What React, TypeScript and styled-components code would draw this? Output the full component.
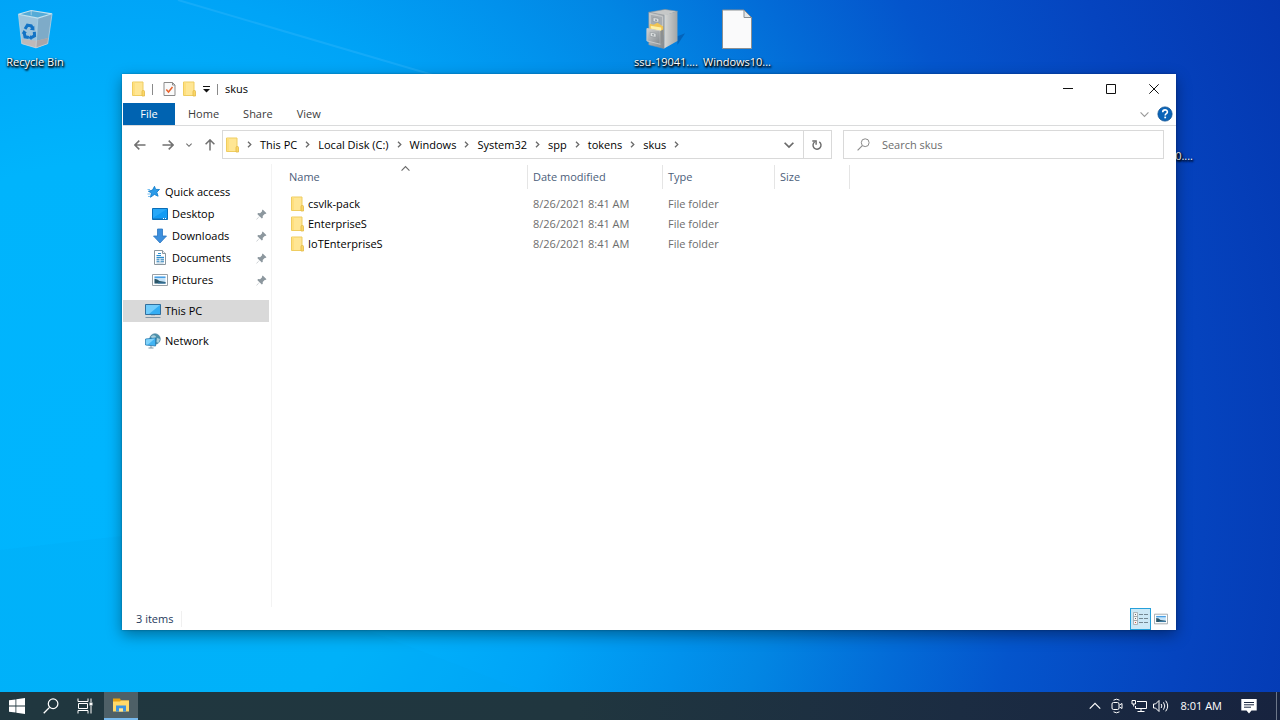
import React from "react";
import styled, { createGlobalStyle } from "styled-components";

const FONT = '"Open Sans", "Noto Sans", "Liberation Sans", sans-serif';

const GlobalStyle = createGlobalStyle`
  *, *::before, *::after { box-sizing: border-box; }
  body { margin: 0; font: 11px/16px ${FONT}; color: #000; }
  button, input { font: inherit; color: inherit; margin: 0; padding: 0; border: 0; background: none; }
  a { color: inherit; text-decoration: none; }
  ul, ol { margin: 0; padding: 0; list-style: none; }
  svg { display: block; flex: none; }
`;

/* ---------- desktop ---------- */

const Desktop = styled.div`
  position: relative;
  display: flex;
  flex-direction: column;
  min-height: 100vh;
  overflow: hidden;
  background: radial-gradient(circle farthest-corner at 8% 65%, #00b5fe 0%, #00b4fc 24%, #00a4f7 38%, #0191ec 48%, #0286e3 54%, #036bd7 64%, #0455cc 73%, #0544bf 86%, #0437b0 100%);
`;

const LightBeams = styled.svg`
  position: absolute;
  inset: 0;
  width: 100%;
  height: 100%;
`;

const Workspace = styled.main`
  position: relative;
  flex: 1;
  display: flex;
  padding: 74px 104px 62px 122px;
`;

const Shortcut = styled.a<{ $x: number; $y: number }>`
  position: absolute;
  left: ${(p) => p.$x}px;
  top: ${(p) => p.$y}px;
  width: 70px;
  display: flex;
  flex-direction: column;
  align-items: center;
  gap: 3px;
  color: #fff;
  white-space: nowrap;
  text-shadow: 0 1px 2px #000, 1px 1px 2px #000, 1px 2px 2px rgba(0, 0, 0, 0.7);
`;

const ClippedLabel = styled.span`
  position: absolute;
  right: 87px;
  top: 148px;
  color: #fff;
  text-shadow: 0 1px 2px #000, 1px 1px 2px #000, 1px 2px 2px rgba(0, 0, 0, 0.7);
`;

/* ---------- window ---------- */

const Window = styled.section`
  position: relative;
  flex: 1;
  min-width: 0;
  display: flex;
  flex-direction: column;
  padding: 1px 0 0 1px;
  background: #fff;
  box-shadow: 0 5px 14px rgba(0, 0, 0, 0.38), 0 0 2px rgba(0, 0, 0, 0.3);
`;

const TitleBar = styled.header`
  display: flex;
  align-items: center;
  height: 28px;
  padding: 0 1px 0 9px;
`;

const QuickTools = styled.div`
  display: flex;
  align-items: center;
  flex: 1;
  gap: 7px;
`;

const Separator = styled.span<{ $wide?: boolean }>`
  width: 1px;
  height: 11px;
  margin-right: ${(p) => (p.$wide ? "3px" : "0")};
  background: #8a8a8a;
`;

const ToolButton = styled.button`
  display: grid;
  place-items: center;
`;

const Title = styled.h1`
  margin: 0;
  font-size: 11px;
  font-weight: 400;
`;

const CaptionButton = styled.button`
  width: 43px;
  height: 28px;
  display: grid;
  place-items: center;
`;

const Ribbon = styled.nav`
  display: flex;
  align-items: stretch;
  height: 23px;
  border-bottom: 1px solid #dadbdc;
`;

const Tab = styled.button<{ $primary?: boolean }>`
  width: ${(p) => (p.$primary ? "52px" : "auto")};
  margin-right: ${(p) => (p.$primary ? "1px" : "0")};
  padding: 0 ${(p) => (p.$primary ? "0" : "12px")};
  line-height: 22px;
  color: ${(p) => (p.$primary ? "#fff" : "#3b3b3b")};
  background: ${(p) => (p.$primary ? "#0063b1" : "transparent")};
`;

const RibbonEnd = styled.div`
  display: flex;
  align-items: center;
  gap: 8px;
  margin-left: auto;
  padding-right: 3px;
`;

const NavBar = styled.div`
  display: grid;
  grid-template-columns: auto minmax(0, 29fr) minmax(0, 15fr);
  align-items: center;
  height: 37px;
  padding: 0 12px 0 11px;
`;

const NavButtons = styled.div`
  display: flex;
  align-items: center;
  gap: 12px;
  padding: 1px 6px 0 0;
`;

const NavButton = styled(ToolButton)<{ $spaced?: boolean }>`
  margin-right: ${(p) => (p.$spaced ? "4px" : "0")};
`;

const AddressBox = styled.div`
  min-width: 0;
  display: flex;
  align-items: stretch;
  height: 29px;
  margin-right: 11px;
  border: 1px solid #d9d9d9;
`;

const Crumbs = styled.ol`
  flex: 1;
  min-width: 0;
  display: flex;
  align-items: center;
  padding-left: 3px;
  white-space: nowrap;
  overflow: hidden;
`;

const Crumb = styled.li`
  display: flex;
  align-items: center;
`;

const CrumbArrow = styled.span`
  width: 21px;
  display: grid;
  place-items: center;
`;

const AddressButton = styled.button<{ $divided?: boolean }>`
  width: 28px;
  display: grid;
  place-items: center;
  border-left: ${(p) => (p.$divided ? "1px solid #d9d9d9" : "0")};
`;

const SearchBox = styled.label`
  min-width: 0;
  display: flex;
  align-items: center;
  gap: 12px;
  height: 29px;
  padding-left: 13px;
  border: 1px solid #d9d9d9;
`;

const SearchInput = styled.input`
  flex: 1;
  min-width: 0;
  outline: 0;
  &::placeholder { color: #6d6d6d; opacity: 1; }
`;

const Body = styled.div`
  flex: 1;
  display: flex;
  min-height: 0;
  padding-top: 1px;
`;

const Sidebar = styled.aside`
  flex: none;
  width: 149px;
  padding: 17px 2px 0 0;
  border-right: 1px solid #f3f3f3;
`;

const Group = styled.ul<{ $main?: boolean }>`
  margin-bottom: ${(p) => (p.$main ? "9px" : "8px")};
`;

const Place = styled.a<{ $nested?: boolean; $selected?: boolean }>`
  display: flex;
  align-items: center;
  gap: 4px;
  height: 22px;
  padding-left: ${(p) => (p.$nested ? "29px" : "22px")};
  padding-right: 2px;
  background: ${(p) => (p.$selected ? "#d9d9d9" : "transparent")};
`;

const PlaceName = styled.span`
  flex: 1;
`;

const Listing = styled.div`
  position: relative;
  flex: 1;
  min-width: 0;
  overflow: hidden;
`;

const SortMark = styled.span`
  position: absolute;
  left: 129px;
  top: 0;
`;

const FileTable = styled.table`
  width: 100%;
  table-layout: fixed;
  border-collapse: collapse;
  text-align: left;
`;

const Column = styled.col<{ $width?: number }>`
  width: ${(p) => (p.$width ? `${p.$width}px` : "auto")};
`;

const HeadCell = styled.th`
  padding: 1px 0 5px;
  font-weight: 400;
  color: #4c607a;
`;

const HeadLabel = styled.div<{ $first?: boolean }>`
  height: 24px;
  line-height: 24px;
  padding-left: ${(p) => (p.$first ? "17px" : "5px")};
  border-right: 1px solid #e5e5e5;
`;

const Cell = styled.td`
  height: 20px;
  padding: 0 0 0 5px;
  color: #6d6d6d;
  white-space: nowrap;
`;

const FileName = styled.a`
  display: flex;
  align-items: center;
  gap: 4px;
  padding-left: 14px;
  color: #000;
`;

const StatusBar = styled.footer`
  display: flex;
  align-items: center;
  justify-content: space-between;
  height: 23px;
  padding: 0 5px 0 13px;
  color: #1e395b;
`;

const ItemCount = styled.span`
  padding-right: 8px;
  border-right: 1px solid #f0f0f0;
`;

const Views = styled.div`
  display: flex;
`;

const ViewButton = styled.button<{ $on?: boolean }>`
  width: ${(p) => (p.$on ? "21px" : "20px")};
  height: 22px;
  display: grid;
  place-items: center;
  background: ${(p) => (p.$on ? "#cce8f6" : "transparent")};
  border: ${(p) => (p.$on ? "1px solid #26a0da" : "0")};
`;

/* ---------- taskbar ---------- */

const Taskbar = styled.footer`
  position: relative;
  display: flex;
  align-items: stretch;
  height: 28px;
  color: #fff;
  background: linear-gradient(90deg, #20373f 0%, #20363f 45%, #1b2c42 75%, #17233f 100%);
`;

const TaskButton = styled.button<{ $active?: boolean }>`
  width: 34px;
  margin-left: ${(p) => (p.$active ? "2px" : "0")};
  display: grid;
  place-items: center;
  background: ${(p) => (p.$active ? "#4e6067" : "transparent")};
  border-bottom: ${(p) => (p.$active ? "2px solid #76b9ed" : "0")};
`;

const Tray = styled.div`
  margin-left: auto;
  display: flex;
  align-items: center;
`;

const TrayButton = styled.button`
  width: 22px;
  height: 28px;
  display: grid;
  place-items: center;
`;

const Clock = styled.time`
  padding: 0 16px 0 9px;
`;

const ShowDesktop = styled.button`
  width: 4px;
  height: 28px;
  margin-left: 16px;
  border-left: 1px solid #6c7789;
`;

/* ---------- icons ---------- */

const FolderIcon = () => (
  <svg width="13" height="16" viewBox="0 0 13 16" aria-hidden="true">
    <path d="M.5 1h10.500v13.500H.5z" fill="#ffe694" stroke="#efcd60" />
    <path d="M1 1.500h2v12.500H1z" fill="#ffdf7d" />
    <path d="M10 10.500q0-1 1-1h.5q1 0 1 1v4.500h-2.500z" fill="#fbd766" stroke="#e3b946" strokeWidth=".8" />
  </svg>
);

const PropertiesIcon = () => (
  <svg width="13" height="16" viewBox="0 0 13 16" aria-hidden="true">
    <path d="M1 1.500h8.500l2.500 2.500v10.500H1z" fill="#fafafa" stroke="#8b8b8b" />
    <path d="M9.500 1.500V4H12" fill="none" stroke="#8b8b8b" />
    <path d="M3.300 8.500l2.200 2.500 4-5" fill="none" stroke="#e8622c" strokeWidth="1.500" />
  </svg>
);

const CustomizeIcon = () => (
  <svg width="7" height="7" viewBox="0 0 7 7" aria-hidden="true">
    <path d="M0 .5h7" stroke="#111" />
    <path d="M0 3h7L3.500 6.500z" fill="#111" />
  </svg>
);

const MinimizeIcon = () => (
  <svg width="10" height="10" viewBox="0 0 10 10" aria-hidden="true"><path d="M0 4.500h10" stroke="#111" /></svg>
);
const MaximizeIcon = () => (
  <svg width="10" height="10" viewBox="0 0 10 10" aria-hidden="true"><path d="M.5.5h9v9h-9z" fill="none" stroke="#111" /></svg>
);
const CloseIcon = () => (
  <svg width="10" height="10" viewBox="0 0 10 10" aria-hidden="true"><path d="M.3.300l9.400 9.400M9.700.300L.3 9.700" stroke="#111" /></svg>
);

type ChevronProps = { dir?: "down" | "up"; w?: number; color?: string; stroke?: number };

const ChevronIcon = ({ dir = "down", w = 8, color = "#6a6a6a", stroke = 1.4 }: ChevronProps) => (
  <svg width={w} height={w} viewBox="0 0 8 8" aria-hidden="true">
    <path d="M.5 2.200L4 5.700l3.500-3.500" fill="none" stroke={color} strokeWidth={stroke} transform={`rotate(${dir === "up" ? 180 : 0} 4 4)`} />
  </svg>
);

const CrumbChevron = () => (
  <svg width="5" height="7" viewBox="0 0 5 7" aria-hidden="true">
    <path d="M1 .7l2.800 2.800L1 6.300" fill="none" stroke="#6a6a6a" strokeWidth="1.300" />
  </svg>
);

const HelpIcon = () => (
  <svg width="16" height="16" viewBox="0 0 16 16" aria-hidden="true">
    <circle cx="8" cy="8" r="7.100" fill="#0a64b8" stroke="#0b4f91" strokeWidth=".8" />
    <path d="M5.700 6.200c0-3.100 4.700-3 4.700-.2 0 1.700-2.200 1.700-2.200 3.400" fill="none" stroke="#fff" strokeWidth="1.600" />
    <path d="M7.300 10.600h1.800v1.700H7.300z" fill="#fff" />
  </svg>
);

const ArrowIcon = ({ turn = 0, color = "#717171" }: { turn?: number; color?: string }) => (
  <svg width="12" height="12" viewBox="0 0 12 12" aria-hidden="true">
    <path d="M11.500 6H1.200M5.300 1.600L.9 6l4.400 4.400" fill="none" stroke={color} strokeWidth="1.500" transform={`rotate(${turn} 6 6)`} />
  </svg>
);

const RefreshIcon = () => (
  <svg width="12" height="12" viewBox="0 0 12 12" aria-hidden="true">
    <path d="M8.300 2.900A4 4 0 1 1 3.600 3" fill="none" stroke="#6a6a6a" strokeWidth="1.400" />
    <path d="M1.300 2h3.800v3.800" fill="none" stroke="#6a6a6a" strokeWidth="1.400" />
  </svg>
);

const MagnifierIcon = ({ size = 13, color = "#8a8a8a", stroke = 1 }: { size?: number; color?: string; stroke?: number }) => (
  <svg width={size} height={size} viewBox="0 0 13 13" aria-hidden="true">
    <circle cx="8.200" cy="4.700" r="3.900" fill="none" stroke={color} strokeWidth={stroke} />
    <path d="M5.300 7.600L.6 12.400" stroke={color} strokeWidth={stroke * 1.1} />
  </svg>
);

const StarIcon = () => (
  <svg width="16" height="16" viewBox="0 0 16 16" aria-hidden="true">
    <path d="M9.500 2.300l1.100 3.100 3.900.1-2.700 2.700 1.300 4-3.700-1.800-3.900 2.900.9-4.500-3-1.500 4.100-1.200z" fill="#2b9be9" stroke="#1580cd" strokeWidth=".9" />
    <path d="M2.500 5.500h2.500M2.500 10h2.500M3 12.500h2" stroke="#6cbaf0" strokeWidth=".9" />
  </svg>
);

const DesktopIcon = () => (
  <svg width="16" height="16" viewBox="0 0 16 16" aria-hidden="true">
    <path d="M.5 2.500h15v11H.5z" fill="#129bf4" stroke="#0b6db6" />
    <path d="M1 3h14L1 12z" fill="#28a8f8" />
    <path d="M1 12.500h14" stroke="#1684d2" />
    <path d="M11 12.500h1M13 12.500h1" stroke="#fff" />
  </svg>
);

const DownloadIcon = () => (
  <svg width="16" height="16" viewBox="0 0 16 16" aria-hidden="true">
    <path d="M5.500 1h5v7h4L8 15 1.500 8h4z" fill="#3d8fdd" stroke="#2b76c0" strokeWidth=".8" />
  </svg>
);

const DocumentIcon = () => (
  <svg width="16" height="16" viewBox="0 0 16 16" aria-hidden="true">
    <path d="M2.500.5h8l3 3v11h-11z" fill="#fff" stroke="#8a969e" />
    <path d="M10.500.5v3h3" fill="#e8eef2" stroke="#8a969e" />
    <path d="M6 3.500h3M4.500 5.500h4.500" stroke="#2c8ed0" />
    <path d="M4.500 7.500H12" stroke="#2c8ed0" strokeWidth="1.400" />
    <path d="M4.500 9.500h3M4.500 11.500h3M8.500 9.500H12M8.500 11.500H12" stroke="#5b9dca" strokeWidth="1.300" />
    <path d="M4.500 13h7" stroke="#a9c6da" />
  </svg>
);

const PictureIcon = ({ size = 16 }: { size?: number }) => (
  <svg width={size} height={size} viewBox="0 0 16 16" aria-hidden="true">
    <path d="M.5 2.500h15v11H.5z" fill="#fff" stroke="#9aa1a6" />
    <path d="M2.500 4.500h11v7h-11z" fill="#c5e3f8" />
    <path d="M2.500 4.500h11v1.500h-11z" fill="#4aa0e6" />
    <path d="M2.500 6.800q3 .2 5 2.200l6 1v1.500h-11z" fill="#2c5668" />
    <path d="M6 10.500h7.500v1H6z" fill="#3b7fae" />
  </svg>
);

const ComputerIcon = () => (
  <svg width="16" height="16" viewBox="0 0 16 16" aria-hidden="true">
    <path d="M.5 1.500h15v10H.5z" fill="#34adf3" stroke="#316f9d" />
    <path d="M1 2h14L4 11H1z" fill="#71ccfb" />
    <path d="M.5 14.500h15" stroke="#8096a6" />
    <path d="M6 12.500h4" stroke="#b8c4cb" />
  </svg>
);

const NetworkIcon = () => (
  <svg width="16" height="16" viewBox="0 0 16 16" aria-hidden="true">
    <circle cx="10" cy="6" r="5.300" fill="#4c91ab" stroke="#497f9b" strokeWidth=".6" />
    <path d="M6 3.500q3-2.500 5 0l-1 2-3 .5zM12 5l3 1-1.500 4-2-1z" fill="#a9cfdc" />
    <path d="M.6 6l10-1v8l-10-1z" fill="#42b4f3" stroke="#2675aa" strokeWidth=".8" />
    <path d="M1 6.500l9-1-7 6H1z" fill="#80d3fb" />
    <path d="M3.500 15h5M6 13v2" stroke="#7c95a3" />
  </svg>
);

const PinIcon = () => (
  <svg width="11" height="11" viewBox="0 0 11 11" aria-hidden="true">
    <path d="M6.700.5l3.800 3.800-1.200.7-.6-.1-2 2 .1 1.800-1 .9-2.200-2.300L.7 10.500l-.3-.3 3-3L1.300 5l.9-.9 1.900.1 2-2-.1-.8z" fill="#8c979e" />
  </svg>
);

const RecycleBinIcon = () => (
  <svg width="36" height="45" viewBox="0 0 38 46" aria-hidden="true">
    <path d="M1.500 8L22 12l-2 31L5 39z" fill="#9dc4dc" />
    <path d="M22 12l15-4L32.500 39 20 43.500z" fill="#7eabc8" />
    <path d="M4.500 34l16 2 12.500-3-.6 6L20 43.500 5 39z" fill="#bfb9b9" />
    <path d="M20.500 36L33 33l-.6 6L20 43.500z" fill="#a8a5a9" />
    <path d="M1.500 8L15 4l22 3.500L22 12z" fill="#54abd7" stroke="#c6e2ee" strokeWidth="1.200" />
    <path d="M15 4v5M1.500 8L5 39l15 4.500L22 12M37 7.500L32.500 39 20 43.500" fill="none" stroke="#c5dbe6" strokeWidth=".7" />
    <g fill="none" stroke="#1273c5" strokeWidth="3.200">
      <path d="M8.500 23.500l2.500-4 4 .7 1.300 2.500" />
      <path d="M7.500 27l1 4.800 4 .8" />
      <path d="M18.300 26.500l.2 4.300-4 2" />
    </g>
    <path d="M13.500 24.200l5 .8-.3-5zM5 28.500l2-4 3.500 3zM14.800 29.800l-2.700 3 3.200 2.700z" fill="#1273c5" />
  </svg>
);

const CabinetIcon = () => (
  <svg width="42" height="45" viewBox="0 0 44 46" aria-hidden="true">
    <defs>
      <linearGradient id="cabinetSide" x1="0" x2="1">
        <stop offset="0" stopColor="#d7d9d8" /><stop offset="1" stopColor="#a1a5a6" />
      </linearGradient>
      <linearGradient id="cabinetFront" x1="0" y1="0" x2="1" y2="1">
        <stop offset="0" stopColor="#d0d2d3" /><stop offset="1" stopColor="#82888c" />
      </linearGradient>
    </defs>
    <g transform="translate(0 2)">
      <path d="M34 29l8-3-8 12z" fill="#063d82" opacity=".4" />
      <path d="M4 4l17-3 13 2-14 5z" fill="#c6c8c8" stroke="#8e9292" strokeWidth=".6" />
      <path d="M20 7l14-4v31L20 42z" fill="url(#cabinetSide)" />
      <path d="M4 4l16 3v35L4 38z" fill="url(#cabinetFront)" stroke="#91969a" strokeWidth=".6" />
      <path d="M5.500 6l13 2.500v10l-13-1z" fill="#a8adb1" stroke="#c9cccd" />
      <path d="M8.500 9.500l6 1v4l-6-.8z" fill="#dcdfe0" stroke="#878e93" strokeWidth=".6" />
      <path d="M10.500 11.500l2 .3v1l-2-.2z" fill="#6e777c" />
      <path d="M5 16l4 1 4-2 6 4v9l-14-4z" fill="#f1c451" />
      <path d="M6 18l11 2v4l-11-3z" fill="#fff0a5" />
      <path d="M2 21l14 2.500v14L2 34z" fill="url(#cabinetFront)" stroke="#c9cccd" />
      <path d="M16 23.500l3-1.500v13l-3 2.500z" fill="#8b8f91" />
      <path d="M5.500 25l6 1.200v4l-6-1z" fill="#dcdfe0" stroke="#878e93" strokeWidth=".6" />
      <path d="M7.500 27l2 .4v1l-2-.2z" fill="#6e777c" />
    </g>
  </svg>
);

const BlankFileIcon = () => (
  <svg width="32" height="45" viewBox="0 0 32 45" aria-hidden="true">
    <path d="M1.500 4h21.500l7.500 7.500V42.500h-29z" fill="#fafafb" stroke="#8a8f93" />
    <path d="M23 4v7.500h7.500z" fill="#e4e6e8" stroke="#8a8f93" />
  </svg>
);

const DetailsViewIcon = () => (
  <svg width="16" height="14" viewBox="0 0 16 14" aria-hidden="true">
    <path d="M.5.5h4v4h-4zM.5 4.500h4v4h-4zM.5 8.500h4v4h-4z" fill="#f5f5f5" stroke="#a0a6aa" strokeWidth=".8" />
    <path d="M2 2.500h1M2 6.500h1" stroke="#6b6b6b" />
    <path d="M2 10.500h1" stroke="#d4533f" />
    <path d="M6 2.500h4M11 2.500h4M6 6.500h4M11 6.500h4M6 10.500h4M11 10.500h4" stroke="#748893" />
  </svg>
);

const WindowsIcon = () => (
  <svg width="16" height="16" viewBox="0 0 16 16" aria-hidden="true">
    <path d="M0 2.300l6.500-.9v6.100H0zM7.300 1.300L16 .1v7.400H7.300zM0 8.400h6.500v6.200L0 13.700zM7.300 8.400H16v7.500l-8.700-1.200z" fill="#fff" />
  </svg>
);

const TaskViewIcon = () => (
  <svg width="16" height="16" viewBox="0 0 16 16" aria-hidden="true" fill="none" stroke="#fff">
    <path d="M1 .5v3h10v-3M1 15.500v-3h10v3" />
    <path d="M1.500 5.500h9v5h-9z" />
    <path d="M14 .5v3.500M14 8v7.500" />
    <path d="M12.500 4.500h3v3h-3z" fill="#fff" stroke="none" />
  </svg>
);

const ExplorerIcon = () => (
  <svg width="16" height="14" viewBox="0 0 16 14" aria-hidden="true">
    <path d="M0 .5h7l1 2h8v3H0z" fill="#e7a112" />
    <path d="M0 3.500h7l1-1h8v11H0z" fill="#ffd968" />
    <path d="M3 13.500v-6h10v6h-3v-3H6v3z" fill="#3c94df" />
    <path d="M6 10.500h4v3H6z" fill="#ffe694" />
  </svg>
);

const MeetNowIcon = () => (
  <svg width="14" height="16" viewBox="0 0 14 16" aria-hidden="true" fill="none" stroke="#fff">
    <path d="M3.500 2.200q3-2 6 0M3.500 13.800q3 2 6 0" />
    <rect x="2" y="4.500" width="7" height="7" rx="1.500" />
    <path d="M9.500 7l2.500-1.500v5L9.500 9" />
  </svg>
);

const WiredIcon = () => (
  <svg width="16" height="14" viewBox="0 0 16 14" aria-hidden="true" fill="none" stroke="#fff">
    <path d="M6 2.500h9.500v7H4.500V7M10 9.500v3M6.500 12.500h7" />
    <path d="M1 1.500h3.500V5H1zM2.700 5v2.500" />
  </svg>
);

const VolumeIcon = () => (
  <svg width="16" height="14" viewBox="0 0 16 14" aria-hidden="true" fill="none" stroke="#fff">
    <path d="M.5 5h2L6 1.500v11L2.500 9h-2z" />
    <path d="M8.200 5q1.300 2 0 4M10.500 3.300q2.600 3.700 0 7.400M12.700 1.700q4 5.300 0 10.600" />
  </svg>
);

const NotificationIcon = () => (
  <svg width="16" height="16" viewBox="0 0 16 16" aria-hidden="true">
    <path d="M.3 1h15.400v11.500H10.500L8 15.500l-2.500-3H.3z" fill="#fff" />
    <path d="M3 4.500h10M3 6.800h10M3 9.200h7" stroke="#1a2740" />
  </svg>
);

/* ---------- data ---------- */

const tabs = ["Home", "Share", "View"];
const path = ["This PC", "Local Disk (C:)", "Windows", "System32", "spp", "tokens", "skus"];
const pinned = [
  { name: "Desktop", Icon: DesktopIcon },
  { name: "Downloads", Icon: DownloadIcon },
  { name: "Documents", Icon: DocumentIcon },
  { name: "Pictures", Icon: PictureIcon },
];
const files = ["csvlk-pack", "EnterpriseS", "IoTEnterpriseS"].map((name) => ({
  name,
  modified: "8/26/2021 8:41 AM",
  type: "File folder",
}));

export default function App() {
  return (
    <Desktop>
      <GlobalStyle />
      <LightBeams viewBox="0 0 1280 720" preserveAspectRatio="none" aria-hidden="true">
        <path d="M178 0L450 80" stroke="#5cc5ff" strokeWidth="2" opacity=".22" />
        <path d="M0 550l122-14L600 720H0z" fill="#00a8ee" opacity=".18" />
      </LightBeams>
      <Workspace>
        <Shortcut href="#recycle-bin" $x={0} $y={6}><RecycleBinIcon />Recycle Bin</Shortcut>
        <Shortcut href="#ssu" $x={631} $y={6}><CabinetIcon />ssu-19041....</Shortcut>
        <Shortcut href="#windows10" $x={702} $y={6}><BlankFileIcon />Windows10...</Shortcut>
        <ClippedLabel>0....</ClippedLabel>

        <Window aria-label="skus">
          <TitleBar>
            <QuickTools>
              <FolderIcon />
              <Separator $wide />
              <ToolButton aria-label="Properties"><PropertiesIcon /></ToolButton>
              <ToolButton aria-label="New folder"><FolderIcon /></ToolButton>
              <ToolButton aria-label="Customize toolbar"><CustomizeIcon /></ToolButton>
              <Separator />
              <Title>skus</Title>
            </QuickTools>
            <CaptionButton aria-label="Minimize"><MinimizeIcon /></CaptionButton>
            <CaptionButton aria-label="Maximize"><MaximizeIcon /></CaptionButton>
            <CaptionButton aria-label="Close"><CloseIcon /></CaptionButton>
          </TitleBar>

          <Ribbon>
            <Tab $primary>File</Tab>
            {tabs.map((t) => <Tab key={t}>{t}</Tab>)}
            <RibbonEnd>
              <ToolButton aria-label="Expand ribbon"><ChevronIcon w={9} color="#9a9a9a" stroke={1} /></ToolButton>
              <ToolButton aria-label="Help"><HelpIcon /></ToolButton>
            </RibbonEnd>
          </Ribbon>

          <NavBar>
            <NavButtons>
              <NavButton $spaced aria-label="Back"><ArrowIcon /></NavButton>
              <NavButton aria-label="Forward"><ArrowIcon turn={180} /></NavButton>
              <NavButton aria-label="Recent"><ChevronIcon w={6} /></NavButton>
              <NavButton aria-label="Up"><ArrowIcon turn={90} /></NavButton>
            </NavButtons>
            <AddressBox>
              <Crumbs>
                <Crumb><FolderIcon /><CrumbArrow><CrumbChevron /></CrumbArrow></Crumb>
                {path.map((p) => (
                  <Crumb key={p}>
                    <a href="#path">{p}</a>
                    <CrumbArrow><CrumbChevron /></CrumbArrow>
                  </Crumb>
                ))}
              </Crumbs>
              <AddressButton aria-label="Previous locations"><ChevronIcon w={10} /></AddressButton>
              <AddressButton $divided aria-label="Refresh"><RefreshIcon /></AddressButton>
            </AddressBox>
            <SearchBox>
              <MagnifierIcon />
              <SearchInput type="text" aria-label="Search skus" placeholder="Search skus" />
            </SearchBox>
          </NavBar>

          <Body>
            <Sidebar>
              <Group $main>
                <li><Place href="#quick"><StarIcon />Quick access</Place></li>
                {pinned.map(({ name, Icon }) => (
                  <li key={name}>
                    <Place href="#place" $nested><Icon /><PlaceName>{name}</PlaceName><PinIcon /></Place>
                  </li>
                ))}
              </Group>
              <Group><li><Place href="#pc" $selected><ComputerIcon />This PC</Place></li></Group>
              <Group><li><Place href="#network"><NetworkIcon />Network</Place></li></Group>
            </Sidebar>
            <Listing>
              <SortMark><ChevronIcon dir="up" w={9} stroke={1} /></SortMark>
              <FileTable>
                <colgroup>
                  <Column $width={256} />
                  <Column $width={135} />
                  <Column $width={112} />
                  <Column $width={75} />
                  <Column />
                </colgroup>
                <thead>
                  <tr>
                    <HeadCell><HeadLabel $first>Name</HeadLabel></HeadCell>
                    <HeadCell><HeadLabel>Date modified</HeadLabel></HeadCell>
                    <HeadCell><HeadLabel>Type</HeadLabel></HeadCell>
                    <HeadCell><HeadLabel>Size</HeadLabel></HeadCell>
                    <td />
                  </tr>
                </thead>
                <tbody>
                  {files.map((f) => (
                    <tr key={f.name}>
                      <Cell><FileName href="#file"><FolderIcon />{f.name}</FileName></Cell>
                      <Cell>{f.modified}</Cell>
                      <Cell>{f.type}</Cell>
                      <Cell />
                      <td />
                    </tr>
                  ))}
                </tbody>
              </FileTable>
            </Listing>
          </Body>

          <StatusBar>
            <ItemCount>3 items</ItemCount>
            <Views>
              <ViewButton $on aria-label="Details view"><DetailsViewIcon /></ViewButton>
              <ViewButton aria-label="Large icons view"><PictureIcon size={14} /></ViewButton>
            </Views>
          </StatusBar>
        </Window>
      </Workspace>

      <Taskbar>
        <TaskButton aria-label="Start"><WindowsIcon /></TaskButton>
        <TaskButton aria-label="Search"><MagnifierIcon size={16} color="#fff" /></TaskButton>
        <TaskButton aria-label="Task view"><TaskViewIcon /></TaskButton>
        <TaskButton $active aria-label="File Explorer"><ExplorerIcon /></TaskButton>
        <Tray>
          <TrayButton aria-label="Show hidden icons"><ChevronIcon dir="up" w={12} color="#fff" stroke={0.8} /></TrayButton>
          <TrayButton aria-label="Meet now"><MeetNowIcon /></TrayButton>
          <TrayButton aria-label="Network"><WiredIcon /></TrayButton>
          <TrayButton aria-label="Volume"><VolumeIcon /></TrayButton>
          <Clock>8:01 AM</Clock>
          <TrayButton aria-label="Notifications"><NotificationIcon /></TrayButton>
          <ShowDesktop aria-label="Show desktop" />
        </Tray>
      </Taskbar>
    </Desktop>
  );
}
